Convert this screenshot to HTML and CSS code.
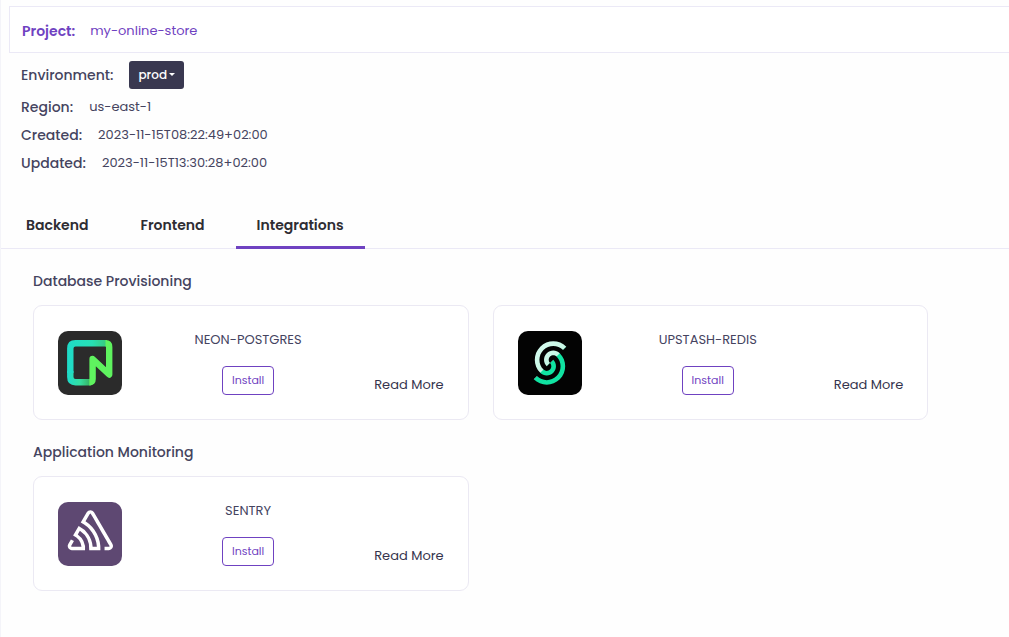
FILE: index.html
```
<!DOCTYPE html>
<html lang="en">
<head>
<meta charset="utf-8">
<meta name="viewport" content="width=device-width, initial-scale=1">
<title>my-online-store</title>
<link rel="stylesheet" href="styles.css">
</head>
<body>
<main class="page">
  <header class="project">
    <span class="project-label">Project:</span>
    <a class="project-link" href="#">my-online-store</a>
  </header>

  <section class="details">
    <div class="detail detail-env">
      <label class="detail-label" for="env">Environment:</label>
      <span class="env">
        <select class="env-select" id="env"><option>prod</option></select>
        <span class="env-caret"></span>
      </span>
    </div>
    <div class="detail"><span class="detail-label">Region:</span><span>us-east-1</span></div>
    <div class="detail"><span class="detail-label">Created:</span><span>2023-11-15T08:22:49+02:00</span></div>
    <div class="detail"><span class="detail-label">Updated:</span><span>2023-11-15T13:30:28+02:00</span></div>
  </section>

  <nav class="tabs">
    <a class="tab" href="#backend">Backend</a>
    <a class="tab" href="#frontend">Frontend</a>
    <a class="tab tab-active" href="#integrations" aria-current="page">Integrations</a>
  </nav>

  <div class="content">
    <section class="group">
      <h2 class="group-title">Database Provisioning</h2>
      <div class="cards">
        <article class="card">
          <svg class="logo" viewBox="0 0 64 64" aria-hidden="true">
            <defs>
              <linearGradient id="neon-side" gradientUnits="userSpaceOnUse" x1="10" y1="0" x2="50" y2="0">
                <stop offset="0" stop-color="#1fdbc8"/><stop offset="0.6" stop-color="#27dfb4"/><stop offset="1" stop-color="#3bc777"/>
              </linearGradient>
              <linearGradient id="neon-base" gradientUnits="userSpaceOnUse" x1="10" y1="0" x2="34" y2="0">
                <stop offset="0" stop-color="#1fdbc8"/><stop offset="0.5" stop-color="#35dfa0"/><stop offset="1" stop-color="#37a856"/>
              </linearGradient>
            </defs>
            <rect width="64" height="64" rx="10" fill="#2b2b2b"/>
            <g fill="none" stroke-width="6.4" stroke-linejoin="round">
              <path stroke="url(#neon-base)" d="M12.3 40V46Q12.3 51.2 17.5 51.2H33"/>
              <path stroke="url(#neon-side)" d="M12.3 42V17.5Q12.3 12.3 17.5 12.3H49"/>
              <path stroke="#5ff35f" d="M31.3 51.2Q34.6 51.2 34.6 48V28L51.2 43.5V16Q51.2 12.3 47.5 12.3"/>
            </g>
          </svg>
          <div class="card-main">
            <h3 class="card-name">NEON-POSTGRES</h3>
            <button class="install" type="button">Install</button>
          </div>
          <a class="more" href="#neon">Read More</a>
        </article>

        <article class="card">
          <svg class="logo" viewBox="0 0 64 64" aria-hidden="true">
            <defs>
              <linearGradient id="upstash" gradientUnits="userSpaceOnUse" x1="4" y1="4" x2="20" y2="20">
                <stop offset="0" stop-color="#d5fbee"/><stop offset="0.49" stop-color="#c6f7e5"/><stop offset="0.51" stop-color="#10e3a2"/><stop offset="1" stop-color="#10e3a2"/>
              </linearGradient>
            </defs>
            <rect width="64" height="64" rx="10" fill="#030303"/>
            <g fill="url(#upstash)" transform="translate(10.3 10.3) scale(1.81)">
              <path d="M13.8027 0C11.193 0 8.583.9952 6.5918 2.9863c-3.9823 3.9823-3.9823 10.4396 0 14.4219 1.9911 1.9911 5.2198 1.9911 7.211 0 1.991-1.9911 1.991-5.2198 0-7.211L12 12c.9956.9956.9956 2.6098 0 3.6055-.9956.9955-2.6099.9955-3.6055 0-2.9866-2.9868-2.9866-7.8297 0-10.8164 2.9868-2.9868 7.8297-2.9868 10.8164 0l1.8028-1.8028C19.0225.9952 16.4125 0 13.8027 0zM12 12c-.9956-.9956-.9956-2.6098 0-3.6055.9956-.9955 2.6098-.9955 3.6055 0 2.9867 2.9868 2.9867 7.8297 0 10.8164-2.9867 2.9868-7.8298 2.9868-10.8164 0l-1.8028 1.8028c3.9823 3.9822 10.4396 3.9822 14.4219 0 3.9823-3.9824 3.9823-10.4396 0-14.4219-.9956-.9956-2.3006-1.4922-3.6055-1.4922-1.3048 0-2.6099.4966-3.6054 1.4922-1.9912 1.9912-1.9912 5.2198 0 7.211z"/>
            </g>
          </svg>
          <div class="card-main">
            <h3 class="card-name">UPSTASH-REDIS</h3>
            <button class="install" type="button">Install</button>
          </div>
          <a class="more" href="#upstash">Read More</a>
        </article>
      </div>
    </section>

    <section class="group">
      <h2 class="group-title">Application Monitoring</h2>
      <div class="cards">
        <article class="card">
          <svg class="logo" viewBox="0 0 64 64" aria-hidden="true">
            <rect width="64" height="64" rx="10" fill="#5e4872"/>
            <path fill="#fff" transform="translate(9.7 5.5) scale(1.89)" d="M13.91 2.505c-.873-1.448-2.972-1.448-3.844 0L6.904 7.92a15.478 15.478 0 0 1 8.53 12.811h-2.221A13.301 13.301 0 0 0 5.784 9.814l-2.926 5.06a7.65 7.65 0 0 1 4.435 5.848H2.194a.365.365 0 0 1-.298-.534l1.413-2.402a5.16 5.16 0 0 0-1.614-.913L.296 19.275a2.182 2.182 0 0 0 .812 2.999 2.24 2.24 0 0 0 1.086.288h6.983a9.322 9.322 0 0 0-3.845-8.318l1.11-1.922a11.47 11.47 0 0 1 4.95 10.24h5.915a17.242 17.242 0 0 0-7.885-15.28l2.244-3.845a.37.37 0 0 1 .504-.13c.255.14 9.75 16.708 9.928 16.9a.365.365 0 0 1-.327.543h-2.287c.029.612.029 1.223 0 1.831h2.297a2.206 2.206 0 0 0 1.922-3.31z"/>
          </svg>
          <div class="card-main">
            <h3 class="card-name">SENTRY</h3>
            <button class="install" type="button">Install</button>
          </div>
          <a class="more" href="#sentry">Read More</a>
        </article>
      </div>
    </section>
  </div>
</main>
</body>
</html>
```
FILE: styles.css
```
* { box-sizing: border-box; }

body {
  margin: 0;
  background: #fefefe;
  color: #45445f;
  font: 13px/20px Poppins, Inter, "Open Sans", sans-serif;
}

a { text-decoration: none; }

.page {
  min-height: 100vh;
  padding-top: 6px;
  border-left: 1px solid #f4f4f9;
}

.project {
  display: flex;
  align-items: center;
  gap: 15px;
  height: 47px;
  margin-left: 8px;
  padding: 2px 12px 0;
  border: 1px solid #ebe9f6;
  border-right: 0;
  background: #fff;
  color: #6f42c1;
}

.project-label { font-size: 14px; font-weight: 600; }
.project-link { color: #6f42c1; }

.details {
  display: flex;
  flex-direction: column;
  gap: 8px;
  padding: 8px 20px 0;
}

.detail {
  display: flex;
  align-items: center;
  gap: 16px;
}

.detail-label { font-size: 14px; font-weight: 500; }

.env { position: relative; }

.env-select {
  display: block;
  height: 28px;
  padding: 0 17px 0 9px;
  appearance: none;
  border: 0;
  border-radius: 3px;
  background: #393850;
  color: #fff;
  font: inherit;
  font-size: 12px;
  font-weight: 500;
}

.env-caret {
  position: absolute;
  top: 12px;
  right: 9px;
  border: 3px solid transparent;
  border-top-color: #fff;
  border-bottom: 0;
  pointer-events: none;
}

.tabs {
  display: flex;
  gap: 10px;
  margin-top: 28px;
  padding-left: 4px;
  border-bottom: 1px solid #ebe9f6;
}

.tab {
  margin-bottom: -1px;
  padding: 14px 21px 11px;
  border-bottom: 3px solid transparent;
  color: #2e2d33;
  font-size: 14px;
  font-weight: 600;
}

.tab-active { border-bottom-color: #6f42c1; border-radius: 2px 2px 0 0; }

.content {
  display: flex;
  flex-direction: column;
  gap: 22px;
  padding: 22px 8vw 32px 32px;
}

.group-title {
  margin: 0 0 14px;
  font-size: 14px;
  font-weight: 500;
  line-height: 20px;
}

.cards {
  display: grid;
  grid-template-columns: repeat(2, 1fr);
  gap: 24px;
}

.card {
  display: flex;
  align-items: center;
  justify-content: space-between;
  padding: 24px;
  border: 1px solid #ebe9f3;
  border-radius: 9px;
  background: #fff;
}

.logo { width: 64px; height: 64px; }

.card-main {
  display: flex;
  flex-direction: column;
  align-items: center;
  gap: 16px;
}

.card-name {
  margin: 0;
  font-size: 13px;
  font-weight: 400;
  line-height: 20px;
}

.install {
  height: 29px;
  padding: 0 8px 2px;
  border: 1px solid #6f42c1;
  border-radius: 4px;
  background: #fff;
  color: #6f42c1;
  font: inherit;
  font-size: 11px;
  min-width: 52px;
}

.more {
  align-self: flex-end;
  color: #35344d;
}
```
